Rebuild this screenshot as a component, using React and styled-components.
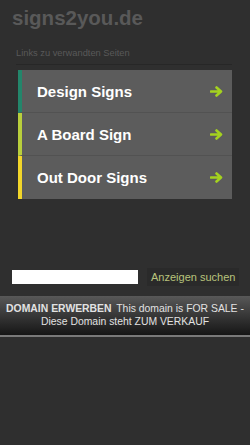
import React from "react";
import styled, { createGlobalStyle } from "styled-components";

const GlobalStyle = createGlobalStyle`
  html, body {
    margin: 0;
    padding: 0;
    background: #2f2f2f;
    font-family: "Liberation Sans", Arial, sans-serif;
  }
`;

const links = [
  { label: "Design Signs", color: "#23866b" },
  { label: "A Board Sign", color: "#b9cf3c" },
  { label: "Out Door Signs", color: "#f2d62a" },
];

const ArrowIcon = () => (
  <svg width="14" height="11" viewBox="0 0 14 11">
    <path
      d="M1 5.5h8.5M6.5 1.5l4.5 4-4.5 4"
      fill="none"
      stroke="#a4d21f"
      strokeWidth="2.6"
      strokeLinecap="round"
      strokeLinejoin="round"
    />
  </svg>
);

const App = () => {
  return (
    <Page>
      <GlobalStyle />
      <Header>
        <Logo>signs2you.de</Logo>
        <Subtitle>Links zu verwandten Seiten</Subtitle>
      </Header>
      <LinkList>
        {links.map((link) => (
          <LinkItem key={link.label} $accent={link.color}>
            <span>{link.label}</span>
            <ArrowIcon />
          </LinkItem>
        ))}
      </LinkList>
      <SearchRow>
        <SearchInput type="text" />
        <SearchButton>Anzeigen suchen</SearchButton>
      </SearchRow>
      <Banner>
        <strong>DOMAIN ERWERBEN</strong> This domain is FOR SALE -
        <br />
        Diese Domain steht ZUM VERKAUF
      </Banner>
    </Page>
  );
};

const Page = styled.div`
  width: 250px;
  min-height: 445px;
  background: #2f2f2f;
`;

const Header = styled.div`
  padding: 6px 0 0 12px;
`;

const Logo = styled.div`
  font-size: 20.5px;
  font-weight: bold;
  color: #595959;
  line-height: 24px;
`;

const Subtitle = styled.div`
  margin: 18px 18px 0 4px;
  padding-bottom: 6px;
  font-size: 9.3px;
  line-height: 10px;
  color: #595959;
  border-bottom: 1px solid #272727;
`;

const LinkList = styled.ul`
  list-style: none;
  margin: 5px 18px 0 18px;
  padding: 0;
`;

const LinkItem = styled.li`
  display: flex;
  align-items: center;
  justify-content: space-between;
  height: 42px;
  padding: 0 8px 0 15px;
  background: #5c5c5c;
  border-left: 4px solid ${({ $accent }) => $accent};
  border-bottom: 1px solid #525252;
  color: #ffffff;
  font-size: 15px;
  font-weight: bold;

  &:last-child {
    border-bottom: none;
    height: 43px;
  }
`;

const SearchRow = styled.div`
  display: flex;
  align-items: center;
  margin-top: 69px;
  padding: 0 12px;
  gap: 9px;
`;

const SearchInput = styled.input`
  width: 126px;
  height: 14px;
  padding: 0;
  border: none;
  outline: none;
  background: #ffffff;
`;

const SearchButton = styled.div`
  padding: 3px 4px;
  background: #2a2a2a;
  color: #b9c47c;
  font-size: 11px;
  white-space: nowrap;
`;

const Banner = styled.div`
  margin-top: 10px;
  padding: 7px 2px 7px;
  background: linear-gradient(#585858, #161616);
  border-bottom: 2px solid #7a7a7a;
  color: #e2e2e2;
  font-size: 10.4px;
  line-height: 12.5px;
  text-align: center;
  white-space: nowrap;

  strong {
    margin-right: 2px;
  }
`;

export default App;
